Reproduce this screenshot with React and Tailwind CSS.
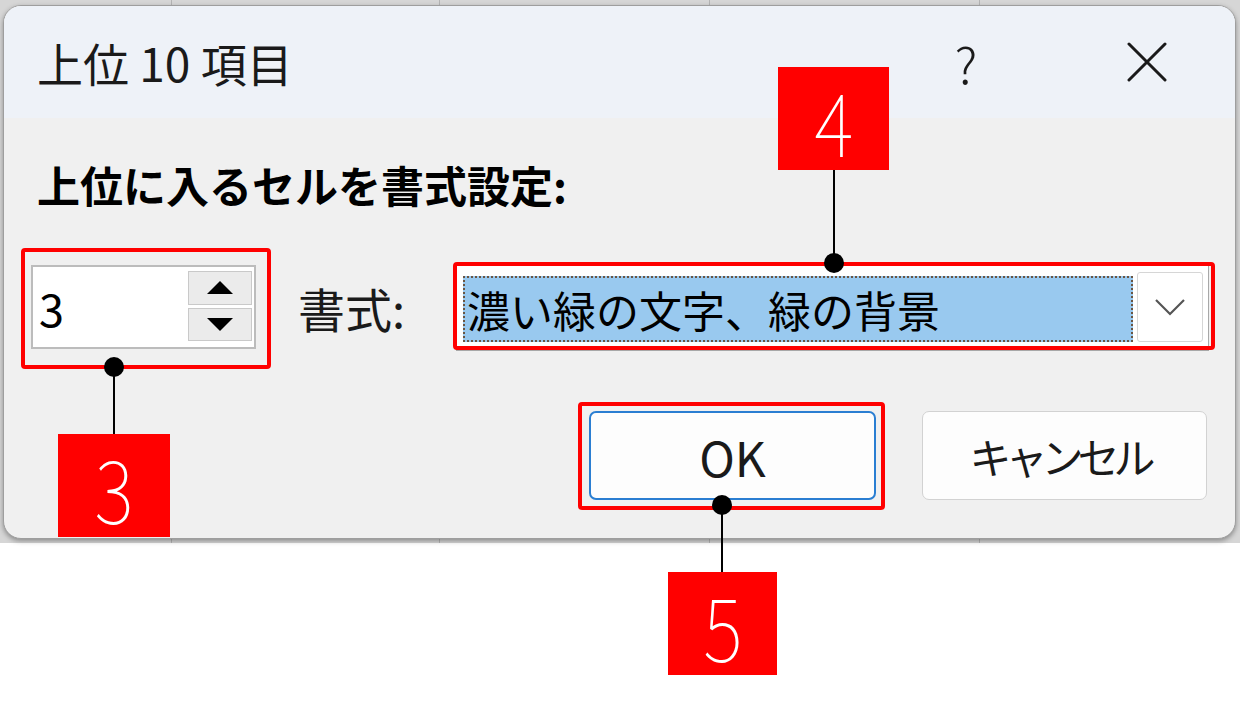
import { useState } from "react";

const jp = "font-['Noto_Sans_CJK_JP',sans-serif]";

// 背景のシート（ダイアログの後ろの罫線）
const SheetBackdrop = () => (
  <div className="flex h-full">
    <div className="w-[172px] border-r border-[#b4b4b4]" />
    <div className="w-[268px] border-r border-[#b4b4b4]" />
    <div className="w-[270px] border-r border-[#b4b4b4]" />
    <div className="w-[270px] border-r border-[#b4b4b4]" />
    <div className="flex-1" />
  </div>
);

const Spinner = ({ value }) => (
  <div className="flex h-[84px] w-[225px] border-2 border-[#bcbcbc] bg-white">
    <div className="flex flex-1 items-center pl-[6px] text-[45px] leading-none text-black">
      {value}
    </div>
    <div className="flex w-[66px] flex-col gap-[3px] pt-[4px] pb-[6px] pr-[2px]">
      <div className="flex flex-1 items-center justify-center border border-[#c9c9c9] bg-[#ebebeb]">
        <svg width="26" height="13" viewBox="0 0 26 13">
          <polygon points="13,0 26,13 0,13" fill="#000" />
        </svg>
      </div>
      <div className="flex flex-1 items-center justify-center border border-[#c9c9c9] bg-[#ebebeb]">
        <svg width="26" height="13" viewBox="0 0 26 13">
          <polygon points="0,0 26,0 13,13" fill="#000" />
        </svg>
      </div>
    </div>
  </div>
);

const Combo = ({ text }) => (
  <div className="flex h-[88px] w-[753px] items-stretch border border-[#a8a8a8] bg-white pl-[6px] pr-[5px]">
    <div className="mt-[12px] mb-[8px] flex flex-1 items-center border-2 border-dotted border-[#6a5644] bg-[#99c9ef] pl-[2px] text-[43px] leading-none text-black">
      {text}
    </div>
    <div className="my-[8px] ml-[4px] flex w-[66px] items-center justify-center rounded-[3px] border border-[#d6d6d6] bg-white">
      <svg width="30" height="17" viewBox="0 0 30 17">
        <polyline points="1,1 15,15 29,1" fill="none" stroke="#555" strokeWidth="2.2" />
      </svg>
    </div>
  </div>
);

const Dialog = () => {
  const [count] = useState(3);

  return (
    <div className="absolute left-[3px] top-[5px] flex h-[534px] w-[1233px] flex-col overflow-hidden rounded-[18px] border border-[#9e9e9e] bg-[#f0f0f0] shadow-[0_2px_5px_rgba(0,0,0,0.35)]">
      {/* タイトルバー */}
      <div className="flex h-[112px] items-center bg-[#eef2f8] pl-[33px] pr-[68px]">
        <div className="text-[46px] leading-none text-[#1a1a1a]">上位 10 項目</div>
        <div className="ml-auto flex w-[40px] justify-center text-[50px] font-light leading-none text-[#1a1a1a]">
          ?
        </div>
        <div className="ml-[141px] flex w-[40px] justify-center">
          <svg width="40" height="40" viewBox="0 0 40 40">
            <path d="M2 2 L38 38 M38 2 L2 38" stroke="#1a1a1a" strokeWidth="3" strokeLinecap="round" />
          </svg>
        </div>
      </div>

      <div className="flex flex-col pt-[45px]">
        <div className="pl-[33px] text-[43px] font-bold leading-none text-black">
          上位に入るセルを書式設定:
        </div>

        <div className="mt-[57px] flex items-center pl-[27px] pr-[26px]">
          <Spinner value={count} />
          <div className="ml-[42px] text-[47px] leading-none text-[#1a1a1a]">書式:</div>
          <div className="ml-auto">
            <Combo text="濃い緑の文字、緑の背景" />
          </div>
        </div>

        <div className="mt-[60px] flex justify-end gap-[46px] pr-[28px]">
          <button className="flex h-[89px] w-[287px] items-center justify-center rounded-[7px] border-2 border-[#2a7ed2] bg-[#fdfdfd] text-[48px] leading-none text-[#1a1a1a]">
            OK
          </button>
          <button className="flex h-[89px] w-[285px] items-center justify-center rounded-[7px] border border-[#d2d2d2] bg-[#fdfdfd] pr-[10px] text-[42px] leading-none tracking-[-6px] text-[#1a1a1a]">
            キャンセル
          </button>
        </div>
      </div>
    </div>
  );
};

// 注釈（赤枠・番号・引き出し線）
const Badge = ({ n, className }) => (
  <div className={`absolute flex items-center justify-center bg-[#ff0000] text-[88px] font-thin leading-none text-white ${className}`}>
    <span className="inline-block scale-x-[0.85]">{n}</span>
  </div>
);

const Annotations = () => (
  <>
    <div className="absolute left-[21px] top-[248px] h-[121px] w-[250px] rounded-[4px] border-4 border-[#ff0000]" />
    <div className="absolute left-[453px] top-[262px] h-[88px] w-[762px] rounded-[4px] border-4 border-[#ff0000]" />
    <div className="absolute left-[578px] top-[402px] h-[108px] w-[307px] rounded-[4px] border-4 border-[#ff0000]" />

    <div className="absolute left-[113px] top-[367px] h-[67px] w-[2px] bg-black" />
    <div className="absolute left-[104px] top-[357px] h-[20px] w-[20px] rounded-full bg-black" />
    <Badge n="3" className="left-[58px] top-[434px] h-[103px] w-[112px]" />

    <div className="absolute left-[833px] top-[170px] h-[93px] w-[2px] bg-black" />
    <div className="absolute left-[824px] top-[253px] h-[20px] w-[20px] rounded-full bg-black" />
    <Badge n="4" className="left-[778px] top-[67px] h-[103px] w-[111px]" />

    <div className="absolute left-[721px] top-[505px] h-[67px] w-[2px] bg-black" />
    <div className="absolute left-[712px] top-[495px] h-[20px] w-[20px] rounded-full bg-black" />
    <Badge n="5" className="left-[668px] top-[572px] h-[103px] w-[109px]" />
  </>
);

const App = () => {
  return (
    <div className={`relative h-[727px] w-[1240px] overflow-hidden bg-white ${jp}`}>
      <div className="relative h-[543px] bg-[#d6d6d6]">
        <SheetBackdrop />
        <Dialog />
      </div>
      <Annotations />
    </div>
  );
};

export default App;
